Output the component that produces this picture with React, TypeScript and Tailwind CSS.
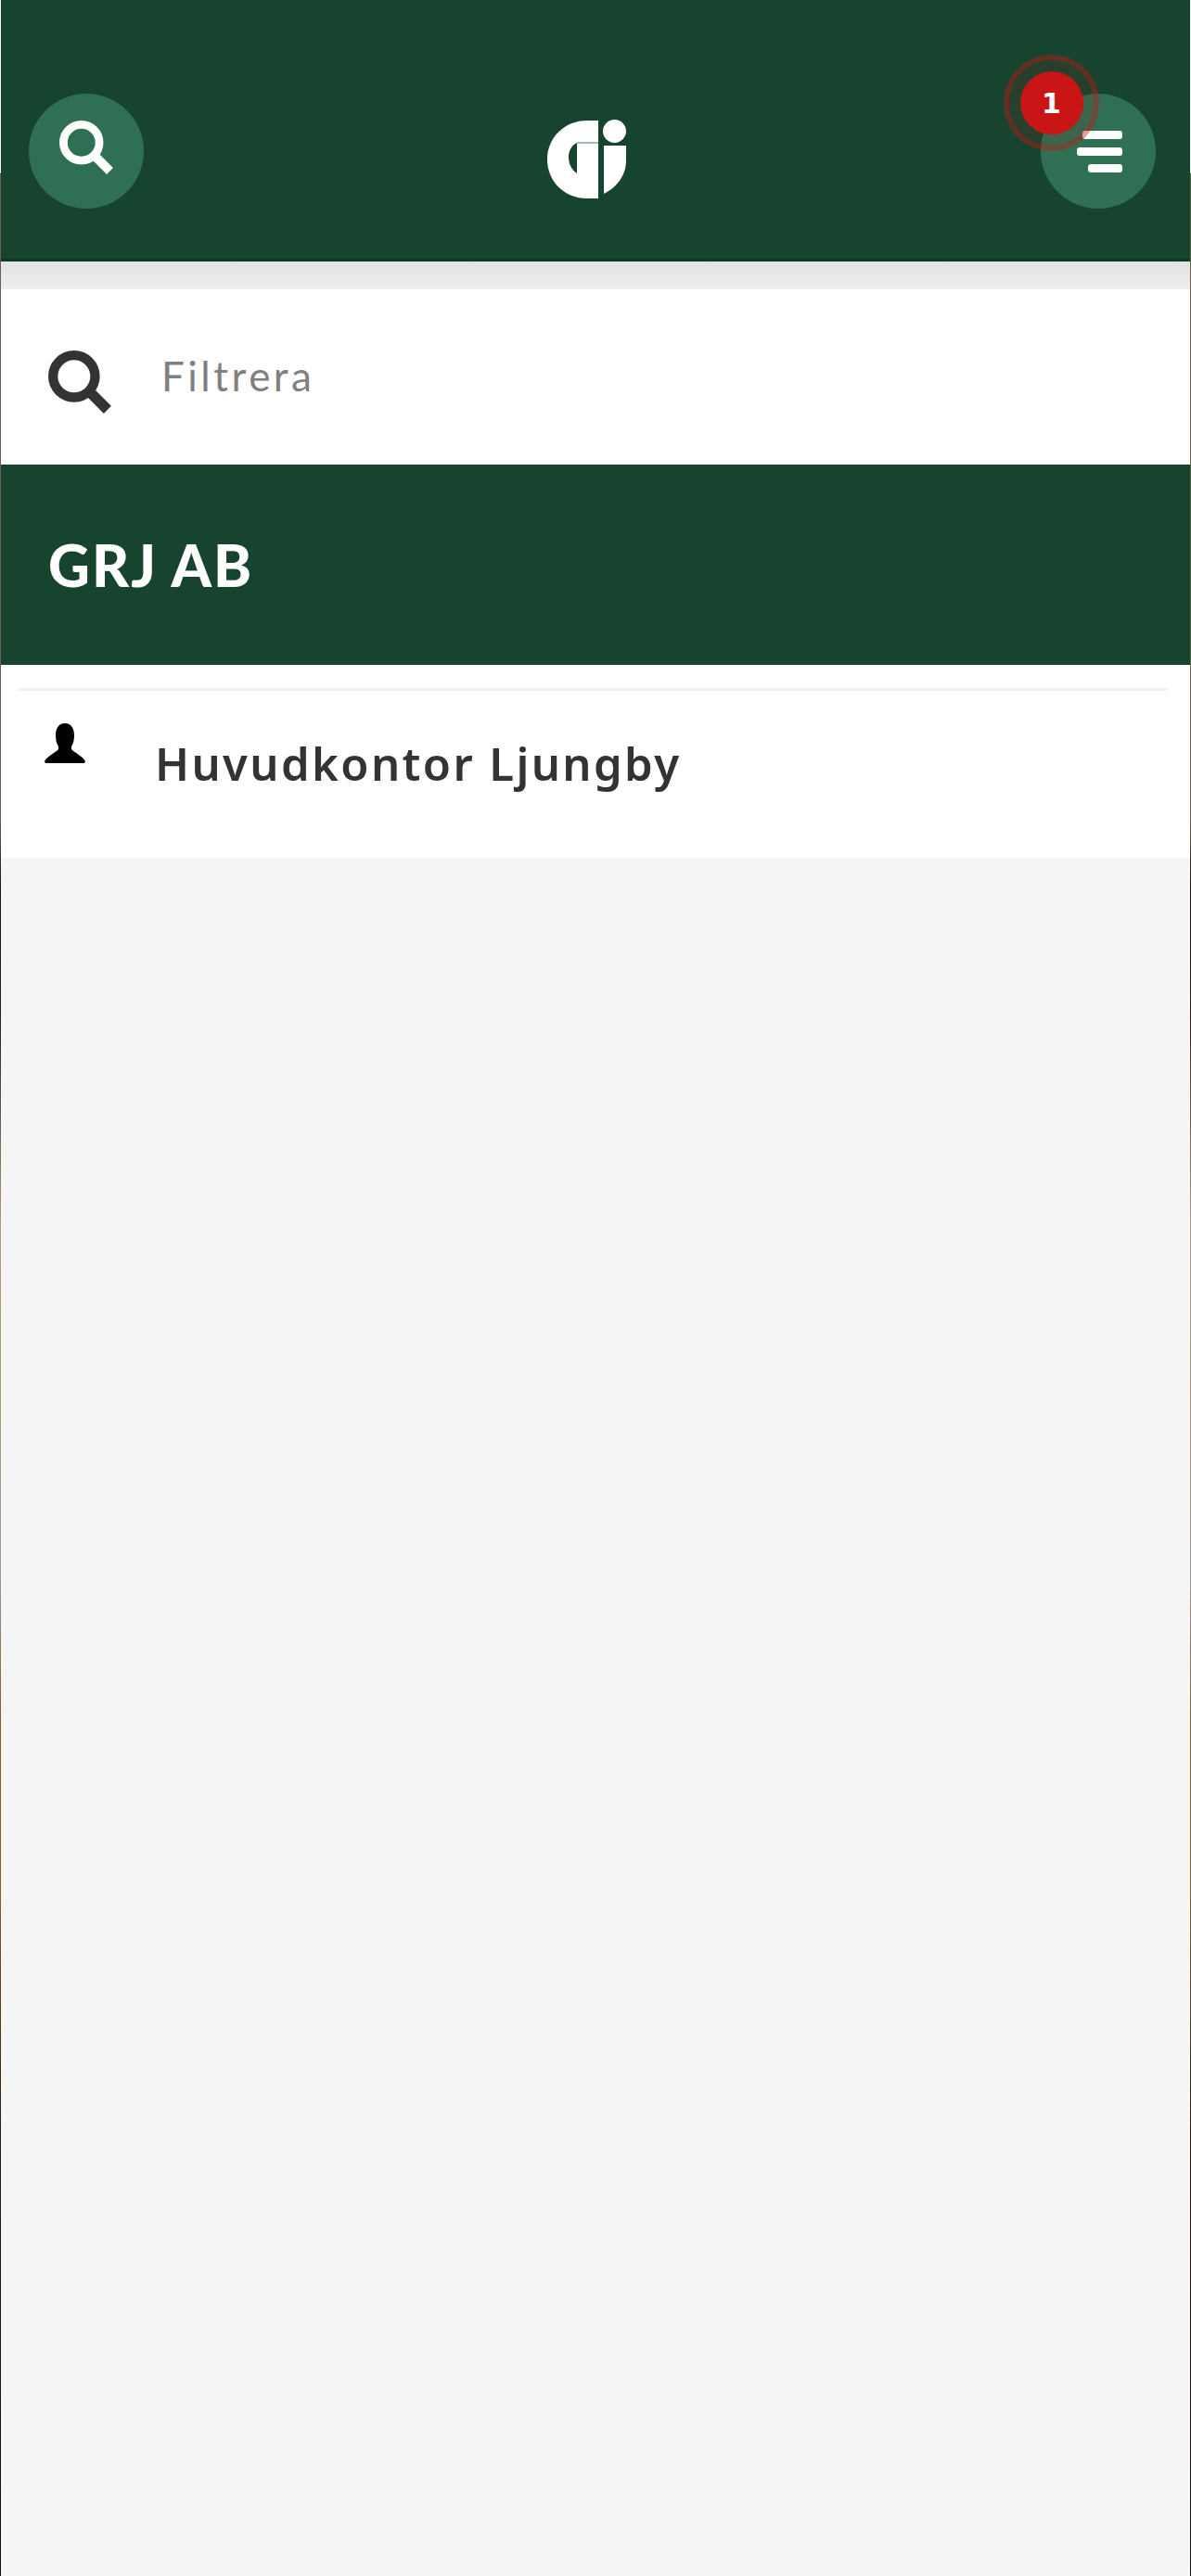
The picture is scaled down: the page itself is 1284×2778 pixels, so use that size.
function SearchGlyph({ className }: { className: string }) {
  return (
    <svg viewBox="0 0 66 66" className={className} fill="none" stroke="currentColor" strokeWidth="10">
      <circle cx="27" cy="27" r="22" />
      <path d="M43 43 L62 62" strokeLinecap="butt" strokeWidth="11" />
    </svg>
  );
}

function Logo() {
  return (
    <svg viewBox="0 0 86 86" className="w-[86px] h-[86px]" fill="#fff">
      {/* G half disc with its crescent counter, then the i stem and dot */}
      <path
        fillRule="evenodd"
        d="M55 1 L55 85 L43 85 C18 85 0 66 0 43 C0 20 18 1 43 1 Z M32 25 C27 27 23 33 23 40 C23 46 25 53 32 58 Z"
      />
      <rect x="32" y="24.5" width="23" height="1" fill="#4d7a63" />
      <circle cx="72.5" cy="12.5" r="12.5" />
      <path d="M61 28 L85 28 L85 44 C85 60 75 73 61 80 Z" />
    </svg>
  );
}

function PersonGlyph() {
  return (
    <svg viewBox="0 0 44 43" className="w-[44px] h-[43px] shrink-0" fill="#000">
      <path d="M22 0 C29 0 32 6 32 13 C32 18 31 22 29 25 L29 28 C31 31 42 36 44 41 L43 43 L1 43 L0 41 C2 36 13 31 15 28 L15 25 C13 22 12 18 12 13 C12 6 15 0 22 0 Z" />
    </svg>
  );
}

export default function App() {
  return (
    <div className="min-h-[2778px] px-px font-['Lato',sans-serif] bg-[linear-gradient(to_bottom,#ffffff_0,#ffffff_186px,#6d5f4e_187px,#6d5f4e_880px,#1a1410_960px,#2a2018_1100px,#b09a80_1320px,#a89a70_1500px,#9a9a9a_1700px,#8a5a20_1850px,#8a5a20_2050px,#2a1a10_2300px,#111111_2778px)]">
      <div className="min-h-[2778px] bg-[#f5f5f5] flex flex-col">
        {/* Top bar */}
        <header className="h-[282px] bg-[#16442e] border-b-[3px] border-b-[#0f3a24] flex justify-between items-start pt-[101px] pl-[30px] pr-[37px]">
          <button className="w-[124px] h-[124px] rounded-full bg-[#2f6f53] flex items-center justify-center text-white">
            <SearchGlyph className="w-[58px] h-[58px] -translate-y-[4px]" />
          </button>
          <div className="pt-[28px] mr-[11px]">
            <Logo />
          </div>
          <div className="relative">
            <button className="w-[124px] h-[124px] rounded-full bg-[#2f6f53] flex flex-col items-end justify-center gap-[9px] pr-[36px]">
              <span className="w-[43px] h-[9px] rounded-[3px] bg-white" />
              <span className="w-[49px] h-[9px] rounded-[3px] bg-white" />
              <span className="w-[37px] h-[9px] rounded-[3px] bg-white" />
            </button>
            {/* Notification count with its pulse ring */}
            <span className="absolute -left-[40px] -top-[42px] w-[103px] h-[104px] rounded-full border-[6px] border-[#c8141459] bg-[#c814141a] flex items-center justify-center">
              <span className="w-[68px] h-[68px] rounded-full bg-[#c91515] text-white text-[30px] font-black flex items-center justify-center font-['DejaVu_Sans',sans-serif]">
                1
              </span>
            </span>
          </div>
        </header>

        <div className="h-[30px] bg-gradient-to-b from-[#e3e3e3] to-[#eeeeee]" />

        {/* Filter */}
        <div className="h-[189px] bg-white flex items-center pl-[51px] gap-[54px]">
          <SearchGlyph className="w-[68px] h-[68px] text-[#333333] translate-y-[5px]" />
          <span className="text-[44px] text-[#808080] tracking-[3.5px] leading-none -translate-y-[2px]">Filtrera</span>
        </div>

        {/* Company heading */}
        <div className="h-[216px] bg-[#16442e] flex items-center pl-[51px]">
          <h1 className="text-[62px] font-black text-white leading-none tracking-[2px]">GRJ AB</h1>
        </div>

        {/* Locations */}
        <div className="h-[208px] bg-white pt-[25px]">
          <div className="h-[3px] bg-[#f2f2f2] ml-[18px] mr-[24px]" />
          <div className="flex items-start pl-[47px] pt-[35px] gap-[75px]">
            <PersonGlyph />
            <span className="text-[49px] font-semibold font-['Noto_Sans',sans-serif] tracking-[2.4px] text-[#333333] leading-none pt-[19px]">
              Huvudkontor Ljungby
            </span>
          </div>
        </div>
      </div>
    </div>
  );
}
